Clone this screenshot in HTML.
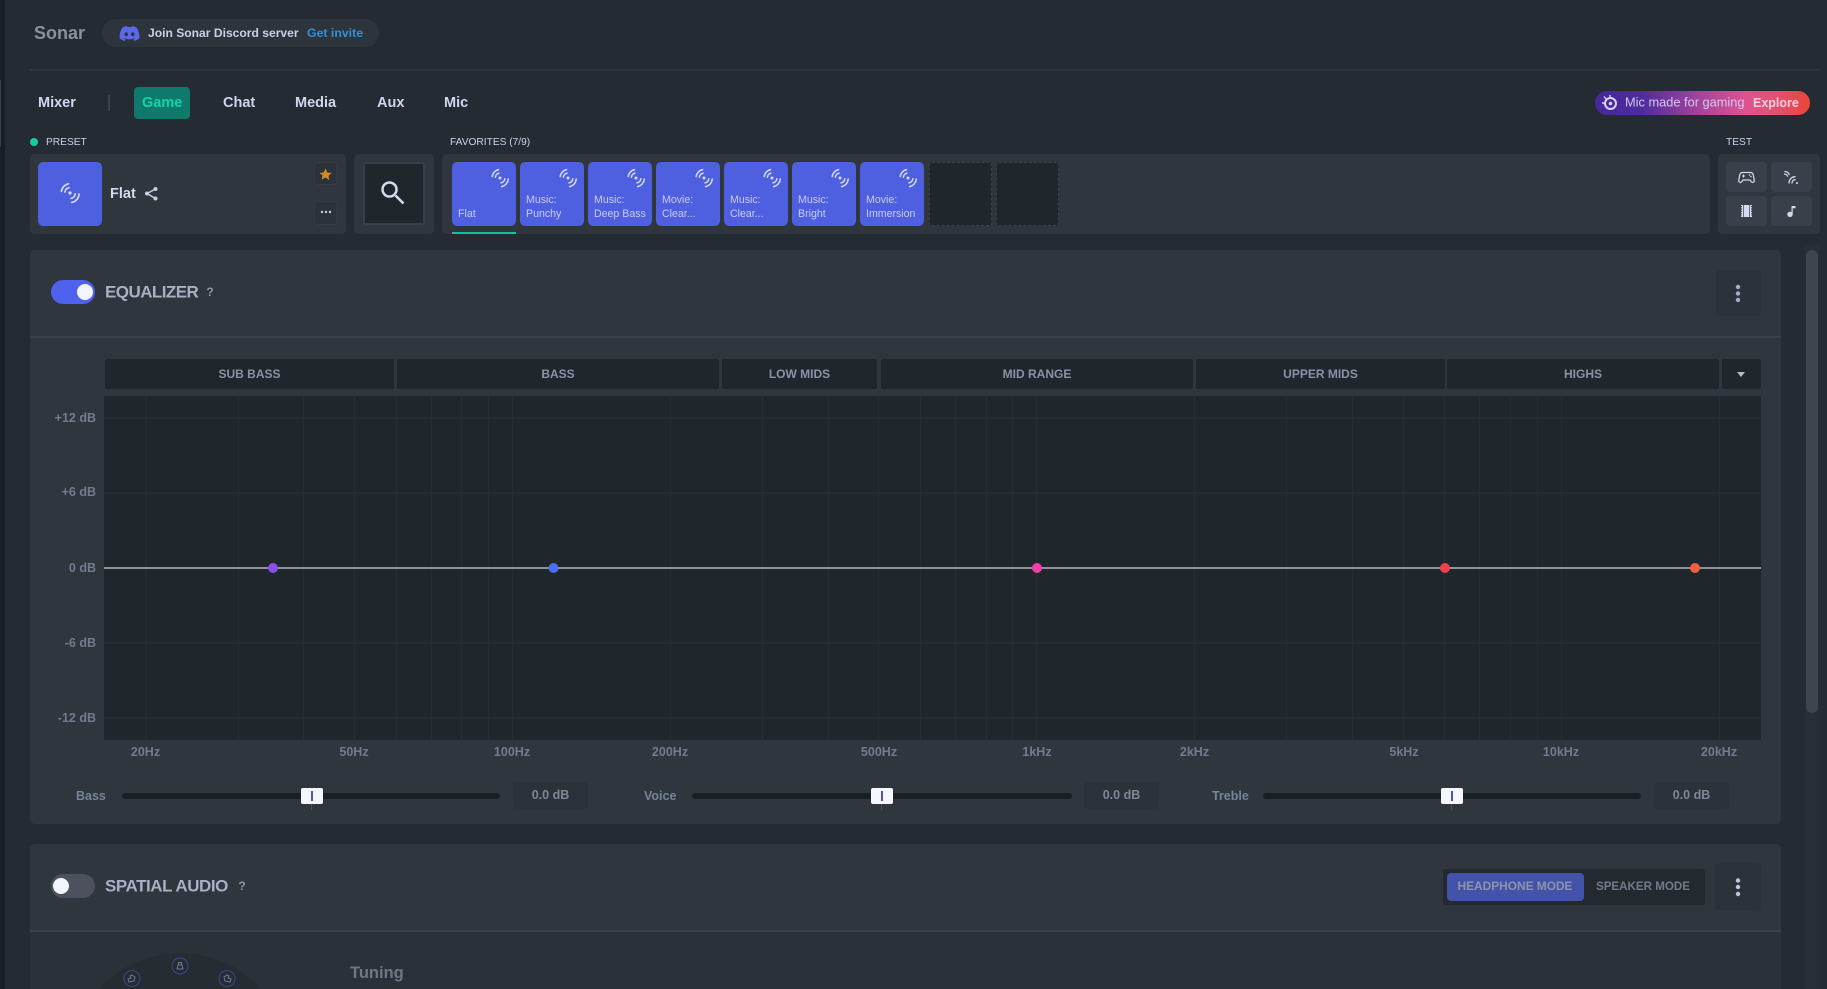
<!DOCTYPE html>
<html><head><meta charset="utf-8"><title>Sonar</title>
<style>
html,body{margin:0;padding:0;width:1827px;height:989px;overflow:hidden;background:#252b32}
body{position:relative;font-family:"Liberation Sans",sans-serif}
.b{position:absolute;box-sizing:border-box}
.t{position:absolute;white-space:nowrap;line-height:1;transform:translateY(-50%)}
.c{position:absolute;white-space:nowrap;line-height:1;transform:translate(-50%,-50%)}
.r{position:absolute;white-space:nowrap;line-height:1;transform:translateY(-50%);text-align:right}
.p{background:#2f363e;border-radius:5px}
.tab{font-size:14.5px;font-weight:700;color:#cfd7f0}
.tile{background:#4e60df;border-radius:5px;width:64px;height:64px;top:162px}
.tl{font-size:10.6px;color:#c6cdf5;left:6px;position:absolute;line-height:14px;bottom:5px;white-space:pre}
.tile svg{position:absolute;left:38px;top:6px}
.empty{width:63px;height:64px;top:162px;background:#1f262c;border:1px dashed #3c4249;border-radius:3px}
.band{background:#1f262c;top:359px;height:30px;border-radius:2px;color:#8b92a8;font-size:12px;font-weight:700;text-align:center;line-height:30px}
.db{font-size:12.5px;font-weight:700;color:#727c8e;right:1731px}
.hz{font-size:12.5px;font-weight:700;color:#727c8e;top:752px}
.sl{font-size:12.5px;font-weight:700;color:#76839a}
.track{background:#191f25;height:6px;top:793px;border-radius:3px}
.thumb{background:#f6f7fd;width:22px;height:16px;top:788px;border-radius:2px}
.thumb:after{content:"";position:absolute;left:10px;top:3px;width:2px;height:10px;background:#4b56b0}
.tick{background:#4a505a;width:1px;height:6px;top:804px}
.val{background:#2b3239;height:27px;top:782px;border-radius:3px;width:75px;text-align:center;line-height:27px;font-size:12.5px;font-weight:700;color:#7e8798}
.tb{background:#3a404a;border-radius:4px;width:41px;height:30px}
.lb{font-size:10.2px;color:#c6d3ea}
</style></head><body>
<svg width="0" height="0" style="position:absolute"><defs>
<symbol id="w" viewBox="0 0 20 20"><g fill="none" stroke="#d5daf5" stroke-width="1.5" stroke-linecap="round"><path d="M2.2 8.6A8.2 8.2 0 0 1 8.6 1.6"/><path d="M5.4 9.2A4.8 4.8 0 0 1 9 5.2"/><path d="M18.2 11A8.2 8.2 0 0 1 11.6 18.6"/><path d="M14.8 10.8A4.8 4.8 0 0 1 11 14.9"/></g><circle cx="10" cy="10" r="1.5" fill="#d5daf5"/></symbol>
</defs></svg>

<div class="b" style="left:0;top:0;width:5px;height:989px;background:#181e23"></div>
<div class="b" style="left:0;top:80px;width:1px;height:67px;background:#39404a"></div>

<div class="t" style="left:34px;top:33px;font-size:18px;font-weight:700;color:#8b919c">Sonar</div>
<div class="b" style="left:102px;top:19px;width:277px;height:28px;background:#2e343c;border-radius:14px"></div>
<svg class="b" style="left:119px;top:26px" width="21" height="15" viewBox="0 0 127.14 96.36"><path fill="#5a69ea" d="M107.7,8.07A105.15,105.15,0,0,0,81.47,0a72.06,72.06,0,0,0-3.36,6.83A97.68,97.68,0,0,0,49,6.83,72.37,72.37,0,0,0,45.64,0,105.89,105.89,0,0,0,19.39,8.09C2.79,32.65-1.71,56.6.54,80.21h0A105.73,105.73,0,0,0,32.71,96.36,77.7,77.7,0,0,0,39.6,85.25a68.42,68.42,0,0,1-10.85-5.18c.91-.66,1.8-1.34,2.66-2a75.57,75.57,0,0,0,64.32,0c.87.71,1.76,1.39,2.66,2a68.68,68.68,0,0,1-10.87,5.19,77,77,0,0,0,6.89,11.1A105.25,105.25,0,0,0,126.6,80.22h0C129.24,52.84,122.09,29.11,107.7,8.07ZM42.45,65.69C36.18,65.69,31,60,31,53s5-12.74,11.43-12.74S54,46,53.89,53,48.84,65.69,42.45,65.69Zm42.24,0C78.41,65.69,73.25,60,73.25,53s5-12.74,11.44-12.74S96.23,46,96.12,53,91.08,65.69,84.69,65.69Z"/></svg>
<div class="t" style="left:148px;top:33px;font-size:12.1px;font-weight:700;color:#c9d0e8">Join Sonar Discord server</div>
<div class="t" style="left:307px;top:33px;font-size:12.3px;font-weight:700;color:#2f8fd8">Get invite</div>
<div class="b" style="left:30px;top:69px;width:1790px;height:2px;background:#2e343c"></div>

<div class="t tab" style="left:38px;top:103px">Mixer</div>
<div class="b" style="left:108px;top:95px;width:2px;height:16px;background:#3b424b"></div>
<div class="b" style="left:134px;top:87px;width:56px;height:32px;background:#0f7a6b;border-radius:4px"></div>
<div class="t tab" style="left:142px;top:103px;color:#12d4a8">Game</div>
<div class="t tab" style="left:223px;top:103px">Chat</div>
<div class="t tab" style="left:295px;top:103px">Media</div>
<div class="t tab" style="left:377px;top:103px">Aux</div>
<div class="t tab" style="left:444px;top:103px">Mic</div>

<div class="b" style="left:1595px;top:91px;width:215px;height:24px;border-radius:12px;background:linear-gradient(90deg,#47279a 0%,#4f2c9c 22%,#a9459a 50%,#de5290 70%,#e2506f 85%,#ea4438 100%)"></div>
<svg class="b" style="left:1601px;top:95px" width="18" height="16" viewBox="0 0 18 16"><circle cx="9.500" cy="8.500" r="5.500" fill="none" stroke="#d9d4f5" stroke-width="2"/><circle cx="9.500" cy="8.500" r="1.800" fill="#d9d4f5"/><path d="M1 8h3M3 1.500l2 2.500M9 0v2" stroke="#d9d4f5" stroke-width="1.400"/></svg>
<div class="t" style="left:1625px;top:103px;font-size:12.8px;color:#d3c9f2">Mic made for gaming</div>
<div class="t" style="left:1753px;top:103px;font-size:12.5px;font-weight:700;color:#f4cfe0">Explore</div>

<div class="b" style="left:30px;top:138px;width:8px;height:8px;border-radius:50%;background:#0fcfa5"></div>
<div class="t lb" style="left:46px;top:142.5px">PRESET</div>
<div class="t lb" style="left:450px;top:142.5px">FAVORITES (7/9)</div>
<div class="t lb" style="left:1726px;top:142.5px">TEST</div>

<div class="b p" style="left:30px;top:154px;width:316px;height:80px"></div>
<div class="b" style="left:38px;top:162px;width:64px;height:64px;background:#4e60df;border-radius:5px"></div>
<svg class="b" style="left:59px;top:182px" width="22" height="22"><use href="#w"/></svg>
<div class="t" style="left:110px;top:193.500px;font-size:14.500px;font-weight:700;color:#d3d9ee">Flat</div>
<svg class="b" style="left:144px;top:186px" width="15" height="15" viewBox="0 0 15 15"><path d="M11.500 3L3 7.500l8.500 5" fill="none" stroke="#c8cee4" stroke-width="1.500"/><circle cx="11.500" cy="3" r="2" fill="#c8cee4"/><circle cx="3" cy="7.500" r="2" fill="#c8cee4"/><circle cx="11.500" cy="12.500" r="2" fill="#c8cee4"/></svg>
<div class="b" style="left:314px;top:162px;width:23px;height:23px;background:#2c3239;border:1px solid #353b44;border-radius:3px"></div>
<svg class="b" style="left:319px;top:168px" width="13" height="13" viewBox="0 0 24 24"><path fill="#d08a28" d="M12 1l3.400 7.200 7.800 1-5.700 5.400 1.500 7.800L12 17.600l-7 3.800 1.500-7.800L.8 9.200l7.800-1z"/></svg>
<div class="b" style="left:314px;top:201px;width:23px;height:24px;background:#2c3239;border:1px solid #353b44;border-radius:3px"></div>
<svg class="b" style="left:320px;top:210px" width="12" height="4"><circle cx="2" cy="2" r="1.200" fill="#c8cee4"/><circle cx="6" cy="2" r="1.200" fill="#c8cee4"/><circle cx="10" cy="2" r="1.200" fill="#c8cee4"/></svg>

<div class="b p" style="left:354px;top:154px;width:80px;height:80px"></div>
<div class="b" style="left:363px;top:162px;width:62px;height:63px;background:#1f262c;border:2px solid #383e47;border-radius:2px"></div>
<svg class="b" style="left:380px;top:180px" width="26" height="26" viewBox="0 0 26 26"><circle cx="9.500" cy="9.500" r="7" fill="none" stroke="#d5daee" stroke-width="2.500"/><path d="M15.500 15.500l8 8" stroke="#d5daee" stroke-width="2.600"/></svg>

<div class="b p" style="left:442px;top:154px;width:1268px;height:80px"></div>
<div class="b tile" style="left:452px"><svg width="20" height="20"><use href="#w"/></svg><div class="tl">Flat</div></div>
<div class="b tile" style="left:520px"><svg width="20" height="20"><use href="#w"/></svg><div class="tl">Music:
Punchy</div></div>
<div class="b tile" style="left:588px"><svg width="20" height="20"><use href="#w"/></svg><div class="tl">Music:
Deep Bass</div></div>
<div class="b tile" style="left:656px"><svg width="20" height="20"><use href="#w"/></svg><div class="tl">Movie:
Clear...</div></div>
<div class="b tile" style="left:724px"><svg width="20" height="20"><use href="#w"/></svg><div class="tl">Music:
Clear...</div></div>
<div class="b tile" style="left:792px"><svg width="20" height="20"><use href="#w"/></svg><div class="tl">Music:
Bright</div></div>
<div class="b tile" style="left:860px"><svg width="20" height="20"><use href="#w"/></svg><div class="tl">Movie:
Immersion</div></div>
<div class="b empty" style="left:929px"></div>
<div class="b empty" style="left:996px"></div>
<div class="b" style="left:452px;top:232px;width:64px;height:2px;background:#12c09c"></div>

<div class="b p" style="left:1718px;top:154px;width:102px;height:80px"></div>
<div class="b tb" style="left:1726px;top:162px"></div>
<div class="b tb" style="left:1771px;top:162px"></div>
<div class="b tb" style="left:1726px;top:196px"></div>
<div class="b tb" style="left:1771px;top:196px"></div>
<svg class="b" style="left:1738px;top:171px" width="17" height="13" viewBox="0 0 17 13"><path d="M4.500 1.500h8c1.500 0 2.300.8 2.700 2.200l1.100 5.500c.3 2-1.800 3-3 1.500L12 9H5l-1.300 1.700c-1.200 1.500-3.300.5-3-1.500L1.800 3.700C2.200 2.300 3 1.500 4.500 1.500z" fill="none" stroke="#d5daf0" stroke-width="1.200"/><path d="M4 5h3M5.500 3.500v3" stroke="#d5daf0"/><circle cx="11.500" cy="4" r=".8" fill="#d5daf0"/><circle cx="13" cy="5.500" r=".8" fill="#d5daf0"/></svg>
<svg class="b" style="left:1784px;top:170px" width="15" height="14" viewBox="0 0 15 14" fill="none" stroke="#d5daf0" stroke-width="1.300" stroke-linecap="round"><path d="M1 1.500c2 .2 3.500 1.200 4.200 3M.5 4c1.500.1 2.500.8 3 2.100"/><path d="M5 13c.1-3.500 2.800-6.200 6-6.300M8 13c.1-1.800 1.400-3.200 3-3.300"/><circle cx="13" cy="13" r=".4"/></svg>
<svg class="b" style="left:1741px;top:205px" width="11" height="12" viewBox="0 0 11 12"><rect width="11" height="12" fill="#d5daf0"/><path d="M.5 1v10M10.500 1v10" stroke="#3a404a" stroke-dasharray="1.200 1.200"/><path d="M2.500 0v12M8.500 0v12" stroke="#3a404a" stroke-width=".7"/></svg>
<svg class="b" style="left:1787px;top:205px" width="9" height="12" viewBox="0 0 9 12"><circle cx="3" cy="9.300" r="2.700" fill="#d5daf0"/><path d="M4.500 9V1h4v2.200H5.700V9z" fill="#d5daf0"/></svg>

<!-- Equalizer card -->
<div class="b" style="left:30px;top:250px;width:1751px;height:574px;background:#2f363e;border-radius:5px"></div>
<div class="b" style="left:51px;top:280px;width:44px;height:24px;border-radius:12px;background:#4f62ee"></div>
<div class="b" style="left:77px;top:284px;width:16px;height:16px;border-radius:50%;background:#f3f4fc"></div>
<div class="t" style="left:105px;top:292px;font-size:17px;font-weight:700;letter-spacing:-.55px;color:#a9b0c6">EQUALIZER</div>
<div class="c" style="left:210px;top:292px;font-size:12px;font-weight:700;color:#8d94a6">?</div>
<div class="b" style="left:1716px;top:270px;width:45px;height:46px;background:#2b3239;border-radius:3px"></div>
<svg class="b" style="left:1733px;top:283px" width="10" height="20"><circle cx="5" cy="4" r="2.200" fill="#a6adca"/><circle cx="5" cy="10.500" r="2.200" fill="#a6adca"/><circle cx="5" cy="17" r="2.200" fill="#a6adca"/></svg>
<div class="b" style="left:30px;top:336px;width:1751px;height:2px;background:#3a4149"></div>

<div class="b band" style="left:105px;width:289px">SUB BASS</div>
<div class="b band" style="left:397px;width:322px">BASS</div>
<div class="b band" style="left:722px;width:155px">LOW MIDS</div>
<div class="b band" style="left:881px;width:312px">MID RANGE</div>
<div class="b band" style="left:1196px;width:249px">UPPER MIDS</div>
<div class="b band" style="left:1447px;width:272px">HIGHS</div>
<div class="b band" style="left:1722px;width:39px"></div>
<svg class="b" style="left:1736px;top:371px" width="10" height="7"><path d="M1 1h8L5 6z" fill="#b6bcd0"/></svg>

<svg class="b" style="left:104px;top:396px" width="1657" height="344" viewBox="104 396 1657 344">
<rect x="104" y="396" width="1657" height="344" fill="#1f262c"/>
<g stroke="#262d33" stroke-width="1.500" fill="none">
<path d="M104 418H1761M104 493H1761M104 643H1761M104 718H1761"/>
<path d="M146 396V740M238.500 396V740M303.500 396V740M354.500 396V740M396.500 396V740M431.500 396V740M461.500 396V740M488.500 396V740M512.500 396V740M670.500 396V740M762.500 396V740M828.500 396V740M878.500 396V740M920.500 396V740M955.500 396V740M986.500 396V740M1012.500 396V740M1036.500 396V740M1194.500 396V740M1286.500 396V740M1352.500 396V740M1403.500 396V740M1444.500 396V740M1479.500 396V740M1510.500 396V740M1537.500 396V740M1561.500 396V740M1719.500 396V740"/>
</g>
<path d="M104 568H1761" stroke="#8f9296" stroke-width="2"/>
<circle cx="273" cy="568" r="5" fill="#8b4df0"/>
<circle cx="553.500" cy="568" r="5" fill="#4b6ff0"/>
<circle cx="1037" cy="568" r="5" fill="#f040a5"/>
<circle cx="1445" cy="568" r="5" fill="#f0404f"/>
<circle cx="1695" cy="568" r="5" fill="#f06040"/>
</svg>

<div class="r db" style="top:418px">+12 dB</div>
<div class="r db" style="top:492px">+6 dB</div>
<div class="r db" style="top:568px">0 dB</div>
<div class="r db" style="top:642.500px">-6 dB</div>
<div class="r db" style="top:717.500px">-12 dB</div>

<div class="c hz" style="left:145.500px">20Hz</div>
<div class="c hz" style="left:354px">50Hz</div>
<div class="c hz" style="left:512px">100Hz</div>
<div class="c hz" style="left:670px">200Hz</div>
<div class="c hz" style="left:879px">500Hz</div>
<div class="c hz" style="left:1037px">1kHz</div>
<div class="c hz" style="left:1194.500px">2kHz</div>
<div class="c hz" style="left:1404px">5kHz</div>
<div class="c hz" style="left:1561px">10kHz</div>
<div class="c hz" style="left:1719px">20kHz</div>

<div class="t sl" style="left:76px;top:796px">Bass</div>
<div class="b track" style="left:122px;width:378px"></div>
<div class="b tick" style="left:311px"></div>
<div class="b thumb" style="left:301px"></div>
<div class="b val" style="left:513px">0.0 dB</div>

<div class="t sl" style="left:644px;top:796px">Voice</div>
<div class="b track" style="left:692px;width:380px"></div>
<div class="b tick" style="left:881px"></div>
<div class="b thumb" style="left:871px"></div>
<div class="b val" style="left:1084px">0.0 dB</div>

<div class="t sl" style="left:1212px;top:796px">Treble</div>
<div class="b track" style="left:1263px;width:378px"></div>
<div class="b tick" style="left:1451px"></div>
<div class="b thumb" style="left:1441px"></div>
<div class="b val" style="left:1654px">0.0 dB</div>

<!-- Spatial card -->
<div class="b" style="left:30px;top:844px;width:1751px;height:145px;background:#2a3138;border-radius:5px 5px 0 0"></div>
<div class="b" style="left:30px;top:844px;width:1751px;height:87px;background:#2f363e;border-radius:5px 5px 0 0"></div>
<div class="b" style="left:51px;top:874px;width:44px;height:24px;border-radius:12px;background:#4d515e"></div>
<div class="b" style="left:53px;top:878px;width:16px;height:16px;border-radius:50%;background:#f3f4fc"></div>
<div class="t" style="left:105px;top:886px;font-size:17px;font-weight:700;letter-spacing:-.45px;color:#a9b0c6">SPATIAL AUDIO</div>
<div class="c" style="left:242px;top:886px;font-size:12px;font-weight:700;color:#8d94a6">?</div>
<div class="b" style="left:1443px;top:869px;width:262px;height:36px;background:#23292f;border-radius:3px"></div>
<div class="b" style="left:1447px;top:873px;width:137px;height:28px;background:#4353a9;border-radius:4px"></div>
<div class="c" style="left:1515px;top:887px;font-size:11.900px;font-weight:700;color:#8d94aa">HEADPHONE MODE</div>
<div class="c" style="left:1643px;top:887px;font-size:11.600px;font-weight:700;color:#737a88">SPEAKER MODE</div>
<div class="b" style="left:1715px;top:863px;width:46px;height:47px;background:#2b3239;border-radius:3px"></div>
<svg class="b" style="left:1733px;top:877px" width="10" height="20"><circle cx="5" cy="3.500" r="2.200" fill="#c0c6de"/><circle cx="5" cy="10" r="2.200" fill="#c0c6de"/><circle cx="5" cy="17" r="2.200" fill="#c0c6de"/></svg>
<div class="b" style="left:30px;top:930px;width:1751px;height:2px;background:#3a4149"></div>

<svg class="b" style="left:60px;top:940px" width="240" height="49" viewBox="60 940 240 49">
<circle cx="180" cy="1062" r="109" fill="#252c32"/>
<g fill="none" stroke="#3d4690" stroke-width="1"><circle cx="180" cy="966" r="8"/><circle cx="132" cy="978.500" r="8"/><circle cx="227" cy="978.500" r="8"/></g>
<g fill="none" stroke="#6f7690" stroke-width="1"><path d="M177 969h6l-1-4h-4zM178.500 965v-2.500h3V965"/><path d="M129 982l5-1 1-4-3-2-2 1 1 2-3 1z"/><path d="M230 982l-5-1-1-4 3-2 2 1-1 2 3 1z"/></g>
</svg>
<div class="t" style="left:350px;top:973px;font-size:16.500px;font-weight:700;color:#6f7684">Tuning</div>

<!-- Scrollbar -->
<div class="b" style="left:1805px;top:245px;width:15px;height:744px;background:#282e35"></div>
<div class="b" style="left:1806px;top:250px;width:12px;height:463px;background:#3e454e;border-radius:6px"></div>
</body></html>
